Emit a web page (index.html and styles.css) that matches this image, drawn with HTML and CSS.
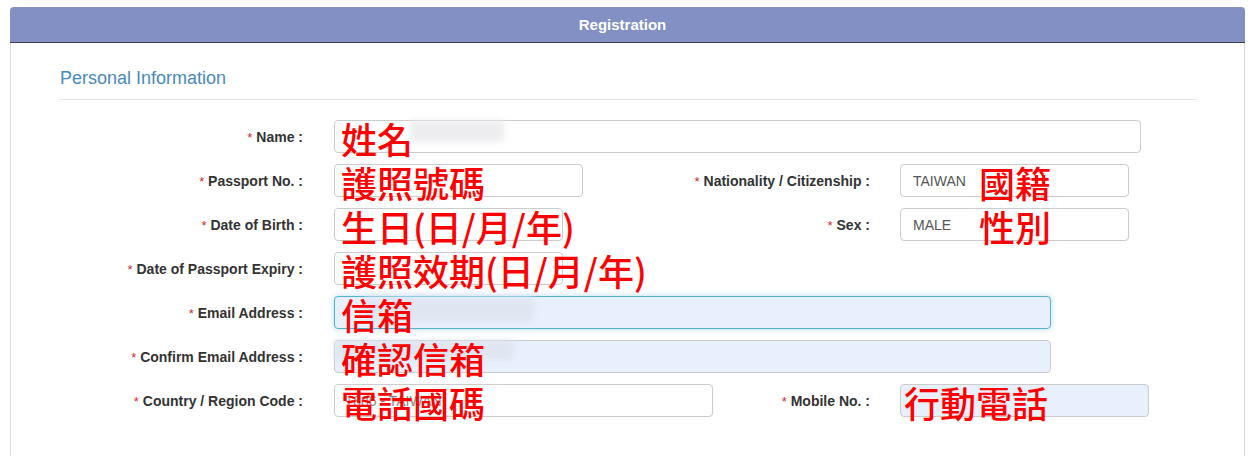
FILE: index.html
```html
<!DOCTYPE html>
<html lang="en">
<head>
    <meta charset="UTF-8">
    <meta name="viewport" content="width=device-width, initial-scale=1.0">
    <title>Registration</title>
    <link rel="stylesheet" href="styles.css">
</head>
<body>
    <div class="panel">
        <div class="panel-heading">Registration</div>
        <div class="panel-body">
            <h4 class="section-title">Personal Information</h4>

            <div class="row">
                <label class="label"><span class="req">*</span> Name :</label>
                <div class="field w-name">
                    <input type="text" class="input">
                    <span class="smudge smudge-name"></span>
                    <span class="note">姓名</span>
                </div>
            </div>

            <div class="row">
                <label class="label"><span class="req">*</span> Passport No. :</label>
                <div class="col-left">
                    <div class="field w-249">
                        <input type="text" class="input">
                        <span class="note">護照號碼</span>
                    </div>
                </div>
                <label class="label label-right"><span class="req">*</span> Nationality / Citizenship :</label>
                <div class="field w-229">
                    <input type="text" class="input" value="TAIWAN">
                    <span class="note note-right">國籍</span>
                </div>
            </div>

            <div class="row">
                <label class="label"><span class="req">*</span> Date of Birth :</label>
                <div class="col-left">
                    <div class="field w-229">
                        <input type="text" class="input">
                        <span class="note">生日(日/月/年)</span>
                    </div>
                </div>
                <label class="label label-right"><span class="req">*</span> Sex :</label>
                <div class="field w-229">
                    <input type="text" class="input" value="MALE">
                    <span class="note note-right">性別</span>
                </div>
            </div>

            <div class="row">
                <label class="label"><span class="req">*</span> Date of Passport Expiry :</label>
                <div class="field w-229">
                    <input type="text" class="input">
                    <span class="note">護照效期(日/月/年)</span>
                </div>
            </div>

            <div class="row">
                <label class="label"><span class="req">*</span> Email Address :</label>
                <div class="field w-email">
                    <input type="text" class="input filled focused">
                    <span class="smudge smudge-mail"></span>
                    <span class="note">信箱</span>
                </div>
            </div>

            <div class="row">
                <label class="label"><span class="req">*</span> Confirm Email Address :</label>
                <div class="field w-email">
                    <input type="text" class="input filled">
                    <span class="smudge smudge-confirm"></span>
                    <span class="note">確認信箱</span>
                </div>
            </div>

            <div class="row">
                <label class="label"><span class="req">*</span> Country / Region Code :</label>
                <div class="col-left">
                    <div class="field w-379">
                        <input type="text" class="input faint" value="+886 - TAIWAN">
                        <span class="note">電話國碼</span>
                    </div>
                </div>
                <label class="label label-right"><span class="req">*</span> Mobile No. :</label>
                <div class="field w-249">
                    <input type="text" class="input filled">
                    <span class="note note-mobile">行動電話</span>
                </div>
            </div>
        </div>
    </div>
</body>
</html>
```

FILE: styles.css
```css
body {
    margin: 7px 9px 0 10px;
    font-family: "Liberation Sans", Arial, sans-serif;
    background: #fff;
    color: #333;
}
.panel {
    border: 1px solid #ddd;
    border-top: none;
    border-radius: 4px 4px 0 0;
    height: 470px;
    box-sizing: border-box;
}
.panel-heading {
    height: 35px;
    line-height: 36px;
    background: #8390c4;
    border-bottom: 1px solid #3c4150;
    border-radius: 4px 4px 0 0;
    margin: 0 -1px;
    padding-right: 10px;
    color: #fff;
    font-weight: bold;
    font-size: 15px;
    text-align: center;
}
.panel-body {
    padding: 25px 48px 0 49px;
}
.section-title {
    margin: 0;
    font-size: 18px;
    font-weight: normal;
    line-height: 21px;
    color: #4a89b9;
    padding-bottom: 10px;
    border-bottom: 1px solid #e5e5e5;
    margin-bottom: 20px;
}
.row {
    display: flex;
    align-items: center;
    height: 33px;
    margin-bottom: 11px;
}
.label {
    width: 274px;
    padding-right: 31px;
    box-sizing: border-box;
    text-align: right;
    font-size: 14px;
    font-weight: bold;
    color: #333;
    white-space: nowrap;
}
.req {
    color: #c9302c;
    font-weight: normal;
    font-size: 13px;
}
.col-left {
    width: 266px;
}
.label-right {
    width: 300px;
    padding-right: 30px;
}
.field {
    position: relative;
    height: 33px;
}
.w-name { width: 807px; }
.w-email { width: 717px; }
.w-249 { width: 249px; }
.w-229 { width: 229px; }
.w-379 { width: 379px; }
.input {
    width: 100%;
    height: 33px;
    box-sizing: border-box;
    border: 1px solid #ccc;
    border-radius: 4px;
    padding: 0 12px;
    font-family: "Liberation Sans", Arial, sans-serif;
    font-size: 14px;
    color: #555;
    background: #fff;
    outline: none;
}
.filled {
    background: #e8f0fe;
}
.focused {
    border-color: #4fb3cf;
    box-shadow: 0 0 6px rgba(102, 175, 233, 0.45);
}
.faint {
    color: #888;
    padding-left: 10px;
}
.note {
    position: absolute;
    left: 7px;
    top: 2px;
    line-height: 33px;
    font-family: "Noto Sans CJK TC", sans-serif;
    font-size: 36px;
    font-weight: 500;
    color: #f00;
    white-space: nowrap;
    pointer-events: none;
}
.note-right {
    left: 79px;
}
.note-mobile {
    left: 4px;
}
.smudge {
    position: absolute;
    background: #e9e9ec;
    filter: blur(3px);
    opacity: 0.8;
}
.smudge-name {
    left: 76px;
    top: 0;
    width: 94px;
    height: 22px;
}
.smudge-mail {
    left: 30px;
    top: 0;
    width: 170px;
    height: 26px;
    background: #dde4ee;
}
.smudge-confirm {
    left: 0;
    top: 0;
    width: 180px;
    height: 20px;
    background: #dde4ee;
}
```
